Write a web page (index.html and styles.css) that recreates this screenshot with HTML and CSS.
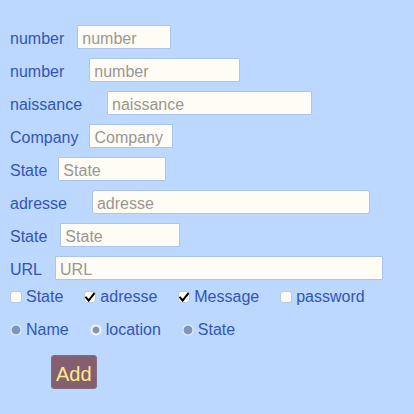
FILE: index.html
```html
<!DOCTYPE html>
<html lang="en">
<head>
<meta charset="utf-8">
<title>Form</title>
<link rel="stylesheet" href="styles.css">
</head>
<body>
<form class="form">
  <div class="field gap-m"><label for="f1">number</label><input class="w-94" id="f1" type="text" placeholder="number"></div>
  <div class="field gap-l"><label for="f2">number</label><input class="w-151" id="f2" type="text" placeholder="number"></div>
  <div class="field gap-l"><label for="f3">naissance</label><input class="w-205" id="f3" type="text" placeholder="naissance"></div>
  <div class="field gap-s"><label for="f4">Company</label><input class="w-84" id="f4" type="text" placeholder="Company"></div>
  <div class="field gap-s"><label for="f5">State</label><input class="w-108" id="f5" type="text" placeholder="State"></div>
  <div class="field gap-l"><label for="f6">adresse</label><input class="w-278 rounded" id="f6" type="text" placeholder="adresse"></div>
  <div class="field gap-m"><label for="f7">State</label><input class="w-120" id="f7" type="text" placeholder="State"></div>
  <div class="field gap-m"><label for="f8">URL</label><input class="w-328" id="f8" type="text" placeholder="URL"></div>
  <div class="options">
    <label><input type="checkbox">State</label>
    <label><input type="checkbox" checked>adresse</label>
    <label><input type="checkbox" checked>Message</label>
    <label><input type="checkbox">password</label>
  </div>
  <div class="options radios">
    <label><input type="radio" name="kind">Name</label>
    <label><input class="small-dot" type="radio" name="kind" checked>location</label>
    <label><input type="radio" name="kind">State</label>
  </div>
  <button class="add" type="button">Add</button>
</form>
</body>
</html>
```
FILE: styles.css
```css
* { box-sizing: border-box; }
body {
  margin: 0;
  background: #bcd8ff;
  color: #3355b5;
  font: 16px/24px "Liberation Sans", Arial, sans-serif;
}
.form { padding: 25px 10px; }
.field {
  display: flex;
  align-items: center;
  height: 24px;
  margin-bottom: 9px;
}
.field label { padding-top: 3px; }
.gap-s { gap: 11px; }
.gap-m { gap: 13px; }
.gap-l { gap: 25px; }
.field input {
  height: 24px;
  padding: 3px 4px 0;
  border: 1px solid #aac4ea;
  border-radius: 1px;
  background: #fffcf5;
  color: #3355b5;
  font: inherit;
  line-height: 19px;
}
.field input.rounded { border-radius: 3px; }
.field input::placeholder { color: #999792; opacity: 1; }
.w-84 { width: 84px; }
.w-94 { width: 94px; }
.w-108 { width: 108px; }
.w-120 { width: 120px; }
.w-151 { width: 151px; }
.w-205 { width: 205px; }
.w-278 { width: 278px; }
.w-328 { width: 328px; }
.options {
  display: flex;
  gap: 21px;
  margin-top: -5px;
}
.options label {
  display: flex;
  align-items: center;
  gap: 4px;
  padding-top: 1px;
  line-height: 23px;
}
.options input {
  appearance: none;
  width: 12px;
  height: 12px;
  margin: 0;
  border: 1px solid #b3cbed;
  border-radius: 3px;
  background: #fffcf5;
}
.options input:checked[type="checkbox"] {
  background: #fffcf5 url("data:image/svg+xml,%3Csvg xmlns='http://www.w3.org/2000/svg' viewBox='0 0 11 11'%3E%3Cpath d='M1 5.5L4 9.5L10 1' fill='none' stroke='black' stroke-width='2'/%3E%3C/svg%3E") center / 11px 11px no-repeat border-box;
}
.radios { margin-top: 9px; }
.options input[type="radio"] {
  border-color: #d3e0f2;
  border-radius: 50%;
  background: radial-gradient(circle, #7d96bd 4px, #fffcf5 5px) border-box;
}
.options input.small-dot[type="radio"] {
  background: radial-gradient(circle, #7d96bd 3px, #fffcf5 4px) border-box;
}
.add {
  display: block;
  height: 34px;
  margin: 14px 0 0 41px;
  padding: 4px 4px 0;
  border: 1px solid #8a6a80;
  border-radius: 3px;
  background: #835f70;
  color: #ffea8a;
  font: 20px/28px "Liberation Sans", Arial, sans-serif;
}
```
